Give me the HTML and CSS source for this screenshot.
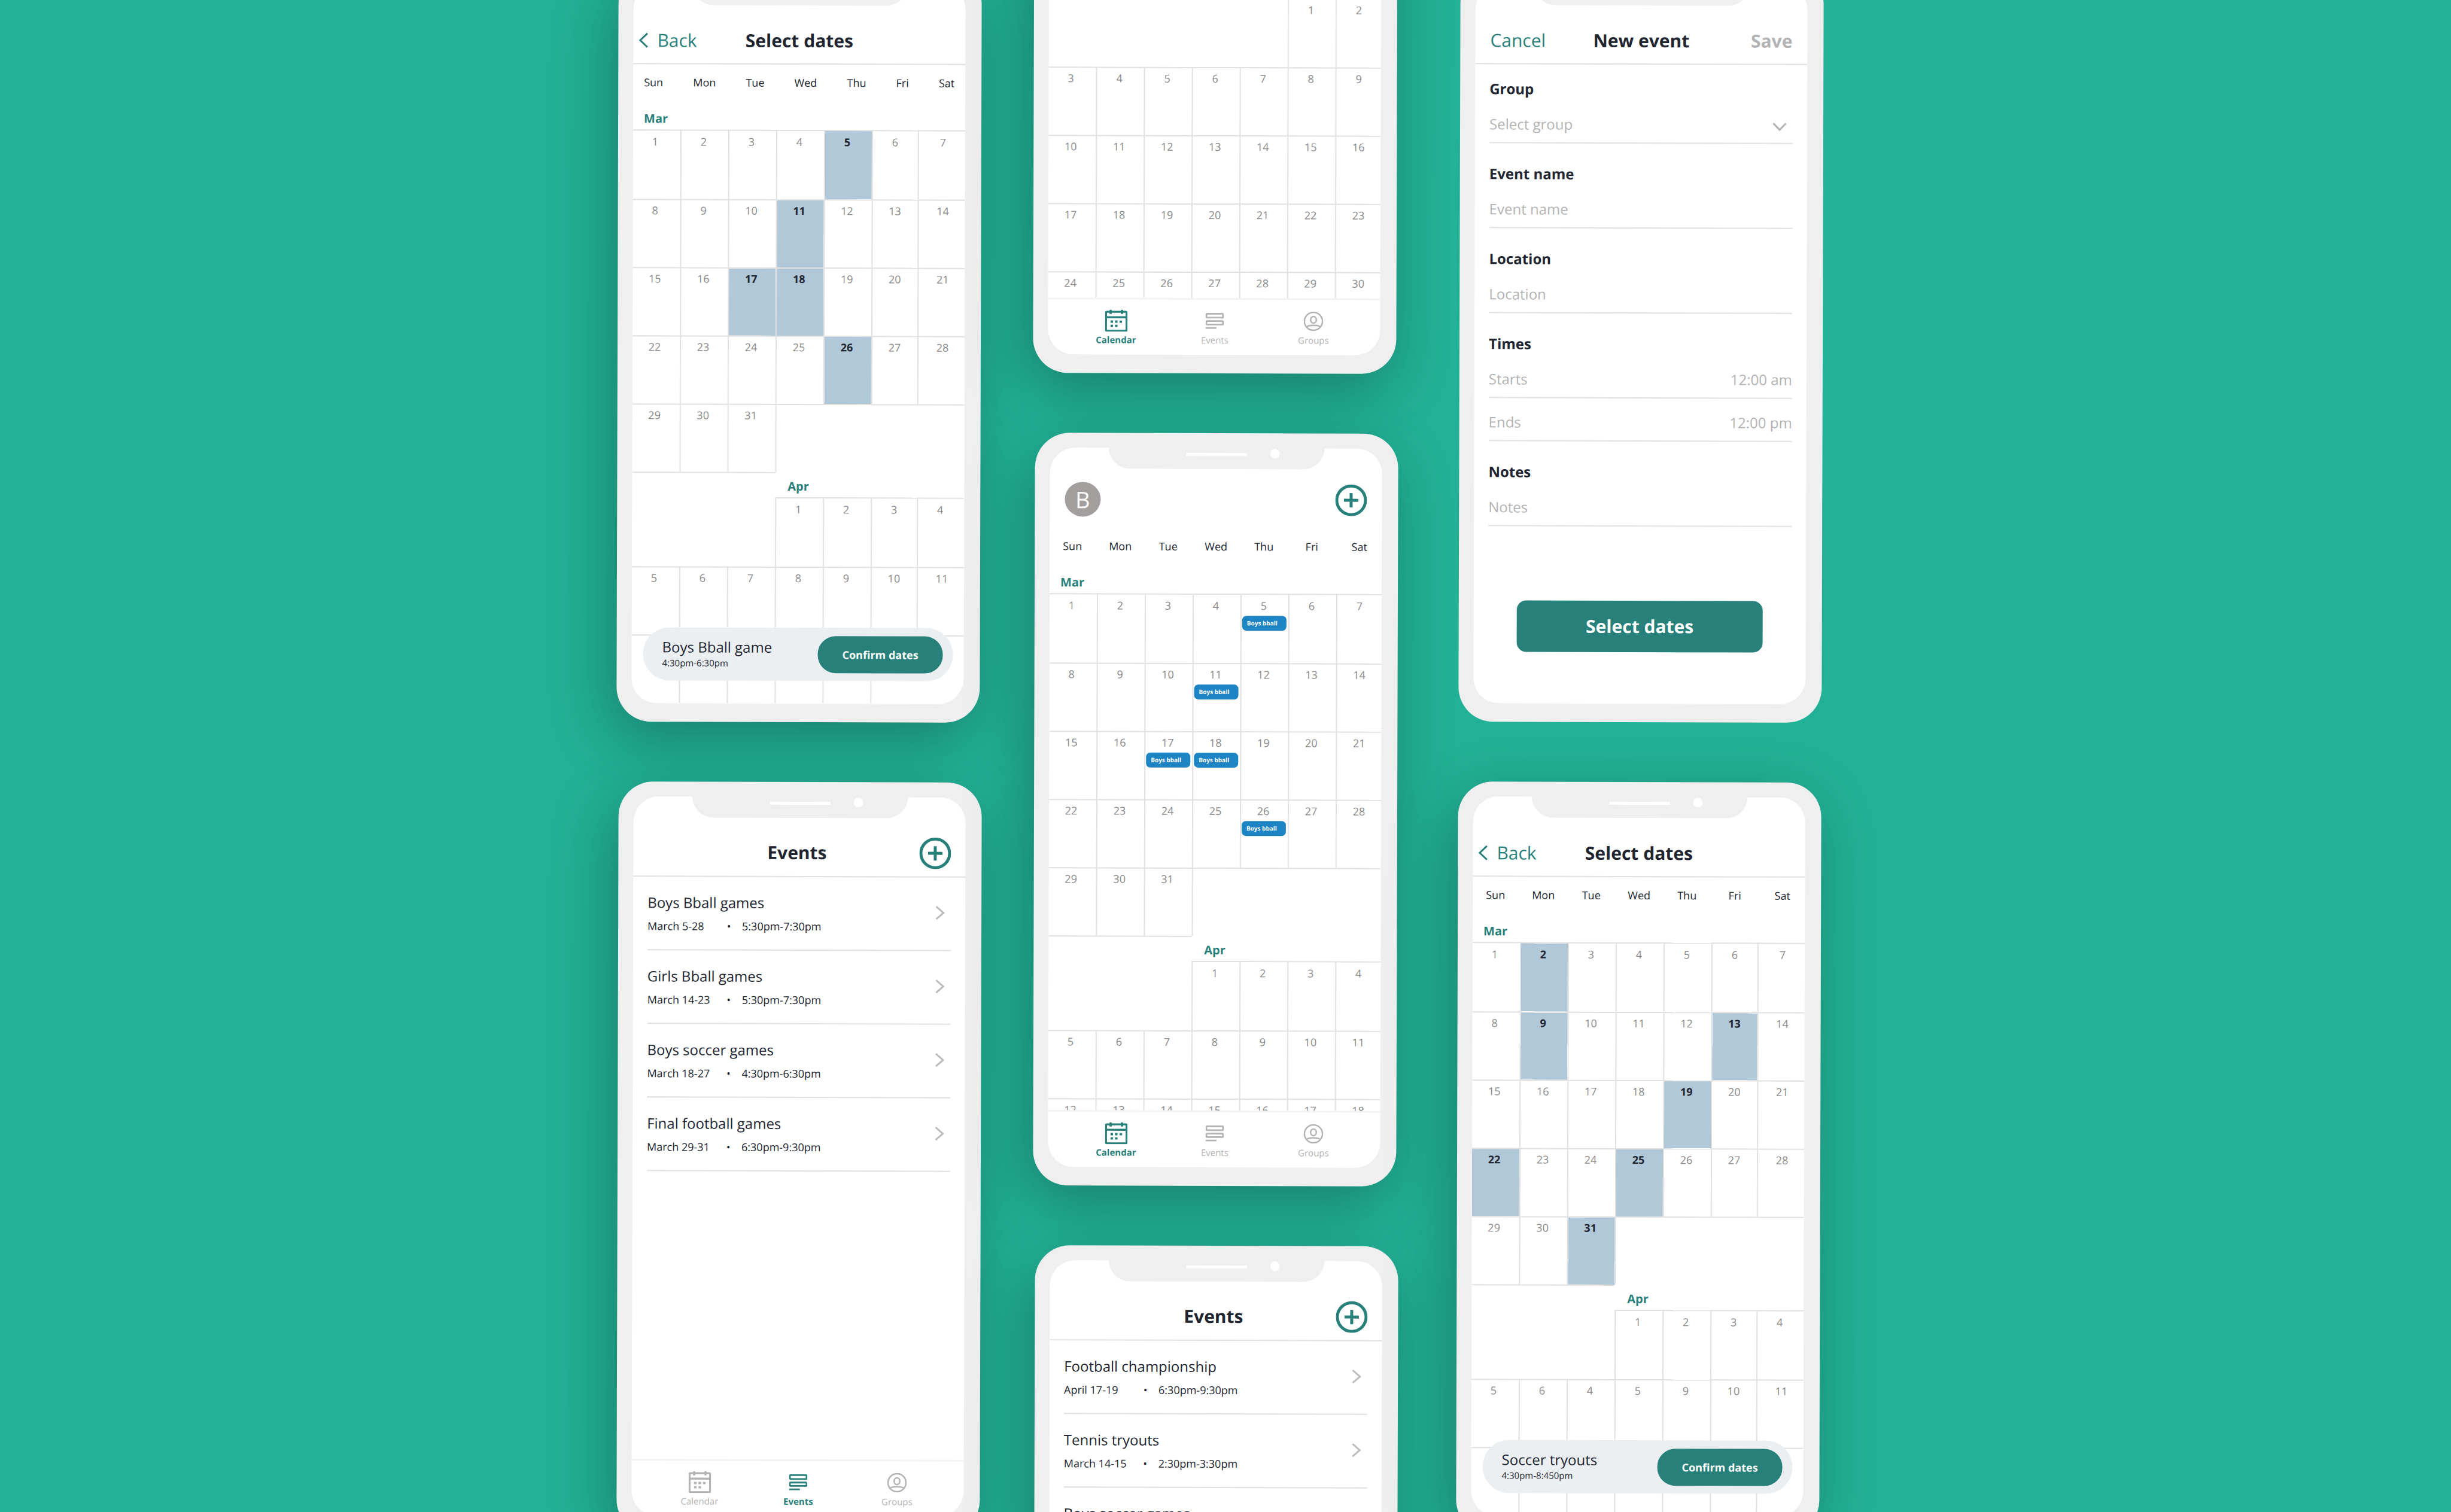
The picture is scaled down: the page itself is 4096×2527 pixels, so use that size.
FILE: index.html
```html
<!DOCTYPE html>
<html lang="en">
<head>
<meta charset="utf-8">
<title>Team calendar screens</title>
<meta name="viewport" content="width=device-width, initial-scale=1">
<link rel="stylesheet" href="styles.css">
</head>
<body>
<svg class="sprite" aria-hidden="true">
  <symbol id="icon-calendar" viewBox="0 0 90 88">
    <rect x="4" y="8.500" width="82" height="75.500" rx="4" fill="none" stroke="currentColor" stroke-width="8"/>
    <path fill="currentColor" d="M4 26h82v8H4zM18 0h9v17h-9zM63 0h9v17h-9zM22 43h10v9H22zM40 43h10v9H40zM58 43h10v9H58zM22 60h10v9H22zM40 60h10v9H40z"/>
  </symbol>
  <symbol id="icon-events" viewBox="0 0 76 67">
    <g fill="none" stroke="currentColor" stroke-width="7">
      <rect x="3.500" y="3.500" width="69" height="16" rx="3"/>
      <rect x="3.500" y="34" width="69" height="14" rx="3"/>
      <path d="M0 62.500h45"/>
    </g>
  </symbol>
  <symbol id="icon-groups" viewBox="0 0 80 80">
    <g fill="none" stroke="currentColor" stroke-width="6">
      <circle cx="40" cy="40" r="36.500"/>
      <ellipse cx="40" cy="34" rx="11.500" ry="13.500"/>
      <path d="M12 63c8-9 48-9 56 0"/>
    </g>
  </symbol>
  <symbol id="icon-add" viewBox="0 0 53 53">
    <g fill="none" stroke="currentColor" stroke-width="5">
      <circle cx="26.500" cy="26.500" r="24"/>
      <path d="M26.500 14.500v24M14.500 26.500h24"/>
    </g>
  </symbol>
  <symbol id="icon-next" viewBox="0 0 16 24">
    <path d="M1.500 1.500 13.500 12 1.500 22.500" fill="none" stroke="currentColor" stroke-width="3"/>
  </symbol>
  <symbol id="icon-back" viewBox="0 0 16 26">
    <path d="M14.500 1.500 2.500 13l12 11.500" fill="none" stroke="currentColor" stroke-width="3"/>
  </symbol>
  <symbol id="icon-down" viewBox="0 0 24 15">
    <path d="M1.500 1.500 12 12.500 22.500 1.500" fill="none" stroke="currentColor" stroke-width="3"/>
  </symbol>
</svg>

<main class="board">

  <section class="column column-left">

    <article class="phone">
      <div class="notch"><i class="speaker"></i><i class="camera"></i></div>
      <div class="screen">
        <header class="bar bar-back">
          <a class="link" href="#"><svg class="back-icon"><use href="#icon-back"/></svg>Back</a>
          <h2 class="title">Select dates</h2>
        </header>
        <div class="weekdays spread"><span>Sun</span><span>Mon</span><span>Tue</span><span>Wed</span><span>Thu</span><span>Fri</span><span>Sat</span></div>
        <div class="scroller">
          <table class="month picker">
            <colgroup><col class="first"><col><col><col><col><col class="narrow"><col class="last"></colgroup>
            <tbody>
              <tr class="label"><th colspan="7">Mar</th></tr>
              <tr class="opening"><td><span>1</span></td><td><span>2</span></td><td><span>3</span></td><td><span>4</span></td><td class="picked"><span>5</span></td><td><span>6</span></td><td><span>7</span></td></tr>
              <tr><td><span>8</span></td><td><span>9</span></td><td><span>10</span></td><td class="picked"><span>11</span></td><td><span>12</span></td><td><span>13</span></td><td><span>14</span></td></tr>
              <tr><td><span>15</span></td><td><span>16</span></td><td class="picked"><span>17</span></td><td class="picked"><span>18</span></td><td><span>19</span></td><td><span>20</span></td><td><span>21</span></td></tr>
              <tr><td><span>22</span></td><td><span>23</span></td><td><span>24</span></td><td><span>25</span></td><td class="picked"><span>26</span></td><td><span>27</span></td><td><span>28</span></td></tr>
              <tr><td><span>29</span></td><td><span>30</span></td><td><span>31</span></td><td colspan="4"></td></tr>
              <tr class="label"><td colspan="3"></td><th colspan="4">Apr</th></tr>
              <tr class="opening"><td class="blank" colspan="3"></td><td><span>1</span></td><td><span>2</span></td><td><span>3</span></td><td><span>4</span></td></tr>
              <tr><td><span>5</span></td><td><span>6</span></td><td><span>7</span></td><td><span>8</span></td><td><span>9</span></td><td><span>10</span></td><td><span>11</span></td></tr>
              <tr><td></td><td></td><td></td><td></td><td></td><td colspan="2"></td></tr>
            </tbody>
          </table>
        </div>
        <div class="confirm">
          <div class="confirm-text"><p class="confirm-name">Boys Bball game</p><p class="confirm-time">4:30pm-6:30pm</p></div>
          <button class="confirm-button" type="button">Confirm dates</button>
        </div>
      </div>
    </article>

    <article class="phone">
      <div class="notch"><i class="speaker"></i><i class="camera"></i></div>
      <div class="screen">
        <header class="bar bar-events">
          <h2 class="title">Events</h2>
          <button class="add" type="button" aria-label="Add event"><svg><use href="#icon-add"/></svg></button>
        </header>
        <ul class="events">
          <li><a class="event" href="#"><span class="event-text"><b>Boys Bball games</b><small><span class="date">March 5-28</span><span class="dot">•</span><span>5:30pm-7:30pm</span></small></span><svg class="next-icon"><use href="#icon-next"/></svg></a></li>
          <li><a class="event" href="#"><span class="event-text"><b>Girls Bball games</b><small><span class="date">March 14-23</span><span class="dot">•</span><span>5:30pm-7:30pm</span></small></span><svg class="next-icon"><use href="#icon-next"/></svg></a></li>
          <li><a class="event" href="#"><span class="event-text"><b>Boys soccer games</b><small><span class="date">March 18-27</span><span class="dot">•</span><span>4:30pm-6:30pm</span></small></span><svg class="next-icon"><use href="#icon-next"/></svg></a></li>
          <li><a class="event" href="#"><span class="event-text"><b>Final football games</b><small><span class="date">March 29-31</span><span class="dot">•</span><span>6:30pm-9:30pm</span></small></span><svg class="next-icon"><use href="#icon-next"/></svg></a></li>
        </ul>
        <nav class="tabs">
          <a href="#"><span class="tab-icon"><svg class="i-calendar"><use href="#icon-calendar"/></svg></span>Calendar</a>
          <a class="active" href="#"><span class="tab-icon"><svg class="i-events"><use href="#icon-events"/></svg></span>Events</a>
          <a href="#"><span class="tab-icon"><svg class="i-groups"><use href="#icon-groups"/></svg></span>Groups</a>
        </nav>
      </div>
    </article>

  </section>

  <section class="column column-mid">

    <article class="phone">
      <div class="screen">
        <div class="scroller scrolled">
          <table class="month">
            <colgroup><col class="first"><col><col><col><col><col><col class="last"></colgroup>
            <tbody>
              <tr class="opening"><td class="blank" colspan="5"></td><td><span>1</span></td><td><span>2</span></td></tr>
              <tr><td><span>3</span></td><td><span>4</span></td><td><span>5</span></td><td><span>6</span></td><td><span>7</span></td><td><span>8</span></td><td><span>9</span></td></tr>
              <tr><td><span>10</span></td><td><span>11</span></td><td><span>12</span></td><td><span>13</span></td><td><span>14</span></td><td><span>15</span></td><td><span>16</span></td></tr>
              <tr><td><span>17</span></td><td><span>18</span></td><td><span>19</span></td><td><span>20</span></td><td><span>21</span></td><td><span>22</span></td><td><span>23</span></td></tr>
              <tr><td><span>24</span></td><td><span>25</span></td><td><span>26</span></td><td><span>27</span></td><td><span>28</span></td><td><span>29</span></td><td><span>30</span></td></tr>
            </tbody>
          </table>
        </div>
        <nav class="tabs">
          <a class="active" href="#"><span class="tab-icon"><svg class="i-calendar"><use href="#icon-calendar"/></svg></span>Calendar</a>
          <a href="#"><span class="tab-icon"><svg class="i-events"><use href="#icon-events"/></svg></span>Events</a>
          <a href="#"><span class="tab-icon"><svg class="i-groups"><use href="#icon-groups"/></svg></span>Groups</a>
        </nav>
      </div>
    </article>

    <article class="phone">
      <div class="notch"><i class="speaker"></i><i class="camera"></i></div>
      <div class="screen">
        <header class="bar bar-home">
          <span class="avatar">B</span>
          <button class="add" type="button" aria-label="Add event"><svg><use href="#icon-add"/></svg></button>
        </header>
        <div class="weekdays"><span>Sun</span><span>Mon</span><span>Tue</span><span>Wed</span><span>Thu</span><span>Fri</span><span>Sat</span></div>
        <div class="scroller">
          <table class="month">
            <colgroup><col class="first"><col><col><col><col><col><col class="last"></colgroup>
            <tbody>
              <tr class="label"><th colspan="7">Mar</th></tr>
              <tr class="opening"><td><span>1</span></td><td><span>2</span></td><td><span>3</span></td><td><span>4</span></td><td><span>5</span><a class="chip" href="#">Boys bball</a></td><td><span>6</span></td><td><span>7</span></td></tr>
              <tr><td><span>8</span></td><td><span>9</span></td><td><span>10</span></td><td><span>11</span><a class="chip" href="#">Boys bball</a></td><td><span>12</span></td><td><span>13</span></td><td><span>14</span></td></tr>
              <tr><td><span>15</span></td><td><span>16</span></td><td><span>17</span><a class="chip" href="#">Boys bball</a></td><td><span>18</span><a class="chip" href="#">Boys bball</a></td><td><span>19</span></td><td><span>20</span></td><td><span>21</span></td></tr>
              <tr><td><span>22</span></td><td><span>23</span></td><td><span>24</span></td><td><span>25</span></td><td><span>26</span><a class="chip" href="#">Boys bball</a></td><td><span>27</span></td><td><span>28</span></td></tr>
              <tr><td><span>29</span></td><td><span>30</span></td><td><span>31</span></td><td colspan="4"></td></tr>
              <tr class="label"><td colspan="3"></td><th colspan="4">Apr</th></tr>
              <tr class="opening"><td class="blank" colspan="3"></td><td><span>1</span></td><td><span>2</span></td><td><span>3</span></td><td><span>4</span></td></tr>
              <tr><td><span>5</span></td><td><span>6</span></td><td><span>7</span></td><td><span>8</span></td><td><span>9</span></td><td><span>10</span></td><td><span>11</span></td></tr>
              <tr><td><span>12</span></td><td><span>13</span></td><td><span>14</span></td><td><span>15</span></td><td><span>16</span></td><td><span>17</span></td><td><span>18</span></td></tr>
            </tbody>
          </table>
        </div>
        <nav class="tabs">
          <a class="active" href="#"><span class="tab-icon"><svg class="i-calendar"><use href="#icon-calendar"/></svg></span>Calendar</a>
          <a href="#"><span class="tab-icon"><svg class="i-events"><use href="#icon-events"/></svg></span>Events</a>
          <a href="#"><span class="tab-icon"><svg class="i-groups"><use href="#icon-groups"/></svg></span>Groups</a>
        </nav>
      </div>
    </article>

    <article class="phone">
      <div class="notch"><i class="speaker"></i><i class="camera"></i></div>
      <div class="screen">
        <header class="bar bar-events">
          <h2 class="title">Events</h2>
          <button class="add" type="button" aria-label="Add event"><svg><use href="#icon-add"/></svg></button>
        </header>
        <ul class="events">
          <li><a class="event" href="#"><span class="event-text"><b>Football championship</b><small><span class="date">April 17-19</span><span class="dot">•</span><span>6:30pm-9:30pm</span></small></span><svg class="next-icon"><use href="#icon-next"/></svg></a></li>
          <li><a class="event" href="#"><span class="event-text"><b>Tennis tryouts</b><small><span class="date">March 14-15</span><span class="dot">•</span><span>2:30pm-3:30pm</span></small></span><svg class="next-icon"><use href="#icon-next"/></svg></a></li>
          <li><a class="event" href="#"><span class="event-text"><b>Boys soccer games</b></span></a></li>
        </ul>
      </div>
    </article>

  </section>

  <section class="column column-right">

    <article class="phone flat">
      <div class="notch"><i class="speaker"></i><i class="camera"></i></div>
      <div class="screen">
        <header class="bar">
          <a class="link" href="#">Cancel</a>
          <h2 class="title">New event</h2>
          <button class="save" type="button">Save</button>
        </header>
        <form class="form">
          <div class="field"><label for="group">Group</label>
            <div class="select"><select id="group"><option>Select group</option></select><svg class="down-icon"><use href="#icon-down"/></svg></div></div>
          <div class="field"><label for="name">Event name</label><input id="name" type="text" placeholder="Event name"></div>
          <div class="field"><label for="place">Location</label><input id="place" type="text" placeholder="Location"></div>
          <fieldset class="field times"><legend>Times</legend>
            <div class="time"><label for="starts">Starts</label><input id="starts" type="text" value="12:00 am"></div>
            <div class="time"><label for="ends">Ends</label><input id="ends" type="text" value="12:00 pm"></div>
          </fieldset>
          <div class="field"><label for="notes">Notes</label><input id="notes" type="text" placeholder="Notes"></div>
          <button class="primary" type="button">Select dates</button>
        </form>
      </div>
    </article>

    <article class="phone">
      <div class="notch"><i class="speaker"></i><i class="camera"></i></div>
      <div class="screen">
        <header class="bar bar-back">
          <a class="link" href="#"><svg class="back-icon"><use href="#icon-back"/></svg>Back</a>
          <h2 class="title">Select dates</h2>
        </header>
        <div class="weekdays"><span>Sun</span><span>Mon</span><span>Tue</span><span>Wed</span><span>Thu</span><span>Fri</span><span>Sat</span></div>
        <div class="scroller">
          <table class="month picker">
            <colgroup><col class="first"><col><col><col><col><col class="narrow"><col class="last"></colgroup>
            <tbody>
              <tr class="label"><th colspan="7">Mar</th></tr>
              <tr class="opening"><td><span>1</span></td><td class="picked"><span>2</span></td><td><span>3</span></td><td><span>4</span></td><td><span>5</span></td><td><span>6</span></td><td><span>7</span></td></tr>
              <tr><td><span>8</span></td><td class="picked"><span>9</span></td><td><span>10</span></td><td><span>11</span></td><td><span>12</span></td><td class="picked"><span>13</span></td><td><span>14</span></td></tr>
              <tr><td><span>15</span></td><td><span>16</span></td><td><span>17</span></td><td><span>18</span></td><td class="picked"><span>19</span></td><td><span>20</span></td><td><span>21</span></td></tr>
              <tr><td class="picked"><span>22</span></td><td><span>23</span></td><td><span>24</span></td><td class="picked"><span>25</span></td><td><span>26</span></td><td><span>27</span></td><td><span>28</span></td></tr>
              <tr><td><span>29</span></td><td><span>30</span></td><td class="picked"><span>31</span></td><td colspan="4"></td></tr>
              <tr class="label"><td colspan="3"></td><th colspan="4">Apr</th></tr>
              <tr class="opening"><td class="blank" colspan="3"></td><td><span>1</span></td><td><span>2</span></td><td><span>3</span></td><td><span>4</span></td></tr>
              <tr><td><span>5</span></td><td><span>6</span></td><td><span>4</span></td><td><span>5</span></td><td><span>9</span></td><td><span>10</span></td><td><span>11</span></td></tr>
              <tr><td></td><td></td><td></td><td></td><td></td><td></td><td></td></tr>
            </tbody>
          </table>
        </div>
        <div class="confirm">
          <div class="confirm-text"><p class="confirm-name">Soccer tryouts</p><p class="confirm-time">4:30pm-8:450pm</p></div>
          <button class="confirm-button" type="button">Confirm dates</button>
        </div>
      </div>
    </article>

  </section>

</main>
</body>
</html>
```
FILE: styles.css
```css
:root {
  --green: #22b196;
  --teal: #28807b;
  --ink: #212530;
  --muted: #b3b3b3;
  --line: #e1e1e1;
  --bezel: #efefef;
}

* { box-sizing: border-box; }

body {
  margin: 0;
  background: var(--green);
  color: var(--ink);
  font-family: "Open Sans", "Noto Sans", sans-serif;
}

h2, p, ul, fieldset, legend { margin: 0; padding: 0; border: 0; font-weight: 400; }
ul { list-style: none; }
a { color: inherit; text-decoration: none; }
button, input, select { font: inherit; color: inherit; border: 0; padding: 0; margin: 0; background: none; border-radius: 0; }
svg { display: block; }
.sprite { position: absolute; width: 0; height: 0; }

/* board */
.board {
  display: grid;
  grid-template-columns: minmax(0, 607px) 89px minmax(0, 607px) 100px minmax(0, 611px);
  justify-content: center;
  height: 100vh;
  padding-right: 18px;
  overflow: hidden;
}
.column { display: flex; flex-direction: column; gap: 100px; margin-top: -51px; }
.column-mid { grid-column: 3; margin-top: -634px; }
.column-right { grid-column: 5; }
.column-right .phone { width: calc(100% - 4px); }
.column-right .phone:first-child { align-self: flex-end; }

/* phone */
.phone {
  position: relative;
  display: flex;
  flex: none;
  aspect-ratio: 607 / 1258;
  min-height: 0;
  padding: 25px 27px 31px 25px;
  border-radius: 58px;
  background: var(--bezel);
  box-shadow: -12px 30px 100px rgba(0, 0, 0, .28);
  transform: rotate(.16deg);
}
.phone.flat { box-shadow: none; }
.screen {
  position: relative;
  display: flex;
  flex-direction: column;
  flex: 1;
  min-width: 0;
  border-radius: 42px;
  background: #fff;
  overflow: hidden;
}
.notch {
  position: absolute;
  z-index: 1;
  top: 24px;
  left: 123px;
  right: 123px;
  height: 36px;
  border-radius: 0 0 36px 36px;
  background: var(--bezel);
}
.speaker { position: absolute; left: 130px; top: 9px; width: 101px; height: 5px; background: #fff; }
.camera { position: absolute; left: 270px; top: 2px; width: 16px; height: 16px; border-radius: 50%; background: #fff; }

/* header bar */
.bar {
  display: grid;
  grid-template-columns: 1fr auto 1fr;
  align-items: center;
  flex: none;
  height: 134px;
  padding: 56px 25px 0;
  border-bottom: 2px solid var(--line);
  font-size: 30px;
  line-height: 40px;
}
.bar-back { padding: 56px 9px 0; }
.bar-events { padding: 54px 24px 0 16px; }
.bar-home { padding: 40px 25px 0; border-bottom-color: transparent; }
.title { grid-column: 2; font-size: 30px; font-weight: 700; }
.link { display: flex; align-items: center; gap: 15px; color: var(--teal); }
.back-icon { width: 16px; height: 26px; }
.save { justify-self: end; color: var(--muted); font-weight: 700; }
.add { grid-column: 3; justify-self: end; color: var(--teal); }
.add svg { width: 53px; height: 53px; }
.avatar {
  width: 60px;
  height: 58px;
  border-radius: 50%;
  background: #a39f9e;
  color: #fff;
  font-size: 38px;
  line-height: 58px;
  text-align: center;
}

/* calendar */
.weekdays {
  display: grid;
  grid-template-columns: repeat(6, 80fr) 75fr;
  flex: none;
  height: 67px;
  padding-top: 18px;
  font-size: 18px;
  line-height: 24px;
  text-align: center;
}
.weekdays span { padding-right: 4px; }
.weekdays span:last-child { padding-right: 0; }
.weekdays.spread { display: flex; justify-content: space-between; padding: 18px 18px 0; }
.weekdays.spread span { padding: 0; }
.scroller { flex: 1; min-height: 0; overflow: hidden; }
.scrolled { display: flex; flex-direction: column; justify-content: flex-end; }
.scrolled .month { margin-bottom: -70px; }

.month { width: 100%; table-layout: fixed; border-collapse: separate; border-spacing: 0; }
.month col { width: 80px; }
.month .first { width: 79px; }
.month .narrow { width: 77px; }
.month .last { width: auto; }
.month tr { height: 114px; }
.month td {
  padding: 5px 0 0;
  border-top: 2px solid var(--line);
  vertical-align: top;
  color: #8a8a8a;
  font-size: 18px;
  line-height: 24px;
}
.month td + td { border-left: 2px solid var(--line); }
.month td span { display: block; width: 74px; text-align: center; }
.picker td:nth-child(7) span { margin-left: 3px; }
.month .opening { height: 116px; }
.month .opening td { padding-top: 6px; }
.month .opening .blank { border-top-color: transparent; }
.month .label { height: 42px; }
.month th {
  padding: 10px 18px 0;
  vertical-align: top;
  text-align: left;
  color: var(--teal);
  font-size: 20px;
  font-weight: 700;
  line-height: 28px;
}
.month td + th { padding-left: 21px; }
.month .picked { background: #b0c8d8; background-clip: padding-box; color: var(--ink); font-weight: 700; }
.chip {
  display: block;
  width: 74px;
  height: 25px;
  margin: 5px 0 0 1px;
  padding-left: 8px;
  border-radius: 7px;
  background: #1e85c4;
  color: #fff;
  font-size: 10px;
  font-weight: 700;
  line-height: 25px;
}

/* confirm pill, floats over the calendar */
.confirm {
  position: absolute;
  left: 19px;
  right: 18px;
  bottom: 38px;
  display: flex;
  align-items: center;
  justify-content: space-between;
  height: 89px;
  padding: 0 17px 0 32px;
  border-radius: 45px;
  background: #ebeff2;
}
.confirm-text { padding-bottom: 4px; }
.confirm-name { font-size: 24px; line-height: 32px; }
.confirm-time { font-size: 15px; line-height: 20px; }
.confirm-button {
  width: 209px;
  height: 62px;
  border-radius: 30px;
  background: var(--teal);
  color: #fff;
  font-size: 18px;
  font-weight: 700;
}

/* events */
.events { flex: 1; padding: 0 24px; }
.event {
  display: flex;
  align-items: flex-start;
  justify-content: space-between;
  height: 123px;
  padding: 26px 10px 0 0;
  border-bottom: 2px solid var(--line);
}
.event-text { display: flex; flex-direction: column; gap: 11px; }
.event b { font-size: 24px; font-weight: 400; line-height: 34px; }
.event small { display: flex; font-size: 18px; line-height: 22px; }
.date { width: 130px; }
.dot { width: 12px; margin-right: 16px; text-align: center; }
.next-icon { width: 16px; height: 24px; margin-top: 21px; color: #bcbcbc; }

/* tab bar */
.tabs { display: flex; flex: none; height: 95px; padding: 16px 29px 0 31px; border-top: 3px solid #f3f3f3; }
.tabs a { flex: 1; display: flex; flex-direction: column; align-items: center; gap: 3px; color: var(--muted); font-size: 15px; line-height: 20px; }
.tabs .active { color: var(--teal); font-weight: 700; }
.tab-icon { display: flex; align-items: center; height: 38px; }
.i-calendar { width: 38px; height: 37px; }
.i-events { width: 31px; height: 27px; }
.i-groups { width: 33px; height: 33px; }

/* form */
.form { display: flex; flex-direction: column; padding: 25px 24px 0; font-size: 24px; line-height: 32px; }
.field { display: flex; flex-direction: column; gap: 12px; margin-bottom: 35px; font-weight: 700; }
.field input, .field select {
  width: 100%;
  height: 63px;
  border-bottom: 2px solid var(--line);
  color: var(--muted);
  font-weight: 400;
  appearance: none;
  outline: 0;
}
.field input::placeholder { color: var(--muted); opacity: 1; }
.select { position: relative; height: 63px; }
.down-icon { position: absolute; right: 10px; top: 27px; width: 24px; height: 15px; color: var(--muted); }
.times { display: block; }
.times legend { font-weight: 700; margin-bottom: 12px; }
.time { display: flex; align-items: center; height: 63px; border-bottom: 2px solid var(--line); color: var(--muted); font-weight: 400; }
.time + .time { margin-top: 9px; }
.field .time input { flex: 1; min-width: 0; height: 61px; border: 0; text-align: right; }
.primary {
  height: 86px;
  margin: 89px 48px 0;
  border-radius: 16px;
  background: var(--teal);
  color: #fff;
  font-size: 30px;
  font-weight: 700;
}
```
